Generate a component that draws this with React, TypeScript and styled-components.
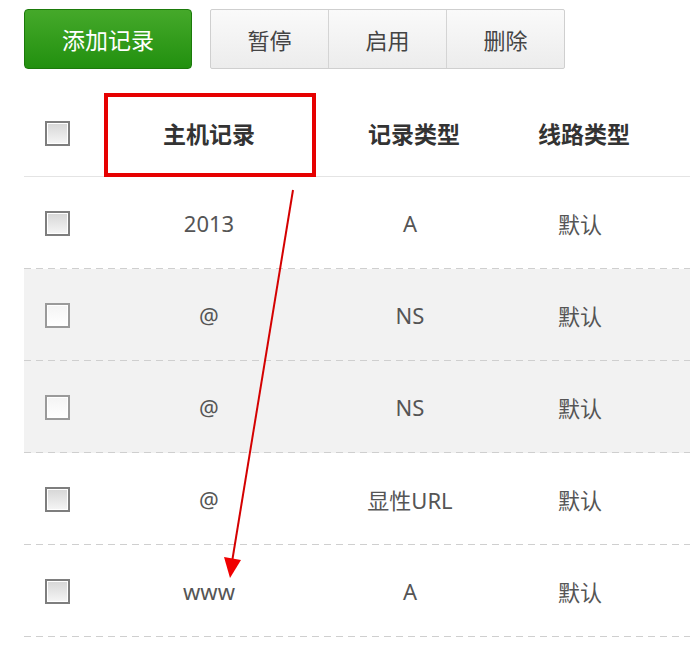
import styled, { createGlobalStyle } from 'styled-components';

interface DnsRecord {
  id: number;
  host: string;
  type: string;
  line: string;
  shaded?: boolean;
}

const RECORDS: DnsRecord[] = [
  { id: 1, host: '2013', type: 'A', line: '默认' },
  { id: 2, host: '@', type: 'NS', line: '默认', shaded: true },
  { id: 3, host: '@', type: 'NS', line: '默认', shaded: true },
  { id: 4, host: '@', type: '显性URL', line: '默认' },
  { id: 5, host: 'www', type: 'A', line: '默认' },
];

const GlobalStyle = createGlobalStyle`
  body {
    margin: 0;
    background: #fff;
    font-family: "Noto Sans", "Noto Sans CJK SC", sans-serif;
  }
`;

export default function App() {
  return (
    <>
      <GlobalStyle />
      <Page>
        <Toolbar>
          <PrimaryButton>添加记录</PrimaryButton>
          <ButtonGroup>
            <GroupButton>暂停</GroupButton>
            <GroupButton>启用</GroupButton>
            <GroupButton>删除</GroupButton>
          </ButtonGroup>
        </Toolbar>

        <Table>
          <HeaderRow>
            <CheckCell>
              <Checkbox />
            </CheckCell>
            <HostCell>主机记录</HostCell>
            <TypeCell>记录类型</TypeCell>
            <LineCell>线路类型</LineCell>
          </HeaderRow>
          {RECORDS.map((r) => (
            <Row key={r.id} $shaded={r.shaded}>
              <CheckCell>
                <Checkbox $light={r.shaded} />
              </CheckCell>
              <HostCell>{r.host}</HostCell>
              <TypeCell>{r.type}</TypeCell>
              <LineCell>{r.line}</LineCell>
            </Row>
          ))}
        </Table>

        {/* red annotation: box round the header cell and arrow down to "www" */}
        <Annotation width="690" height="650" viewBox="0 0 690 650">
          <rect x="106" y="95" width="208" height="80" fill="none" stroke="#e60000" strokeWidth="4" />
          <line x1="293" y1="190" x2="232" y2="562" stroke="#d40000" strokeWidth="2" />
          <polygon points="224,557 241,560 230,578" fill="#f00000" />
        </Annotation>
      </Page>
    </>
  );
}

const Page = styled.div`
  position: relative;
  width: 690px;
  height: 650px;
  padding: 9px 0 0 24px;
  box-sizing: border-box;
  overflow: hidden;
`;

const Toolbar = styled.div`
  display: flex;
  gap: 18px;
`;

const PrimaryButton = styled.div`
  width: 168px;
  height: 60px;
  box-sizing: border-box;
  display: flex;
  align-items: center;
  justify-content: center;
  border: 1px solid #1b7a0a;
  border-radius: 4px;
  background: linear-gradient(#45a92a, #22900f);
  color: #fff;
  font-family: "Noto Sans CJK SC", sans-serif;
  font-size: 23px;
`;

const ButtonGroup = styled.div`
  display: flex;
  width: 355px;
  height: 60px;
  border: 1px solid #cfcfcf;
  border-radius: 2px;
  box-sizing: border-box;
  background: linear-gradient(#fafafa, #ececec);
`;

const GroupButton = styled.div`
  flex: 1;
  display: flex;
  align-items: center;
  justify-content: center;
  color: #444;
  font-family: "Noto Sans CJK SC", sans-serif;
  font-size: 22px;

  & + & {
    border-left: 1px solid #d4d4d4;
  }
`;

const Table = styled.div`
  margin-top: 21px;
  width: 100%;
`;

const HeaderRow = styled.div`
  display: grid;
  grid-template-columns: 66px 238px 172px 168px 1fr;
  align-items: center;
  height: 86px;
  border-bottom: 1px solid #e4e4e4;
  color: #333;
  font-weight: 700;
  font-family: "Noto Sans CJK SC", sans-serif;
  font-size: 23px;
`;

const Row = styled.div<{ $shaded?: boolean }>`
  display: grid;
  grid-template-columns: 66px 238px 164px 176px 1fr;
  align-items: center;
  height: 92px;
  box-sizing: border-box;
  background-color: ${(p) => (p.$shaded ? '#f2f2f2' : '#fff')};
  background-image: repeating-linear-gradient(to right, #cfcfcf 0 7px, transparent 7px 12px);
  background-size: 100% 1px;
  background-position: left bottom;
  background-repeat: no-repeat;
  color: #555;
  font-family: "Noto Sans", "Noto Sans CJK SC", sans-serif;
  font-size: 22px;
`;

const CheckCell = styled.div`
  display: flex;
  justify-content: center;
`;

const HostCell = styled.div`
  text-align: center;
`;

const TypeCell = styled.div`
  text-align: center;
`;

const LineCell = styled.div`
  text-align: center;
`;

const Checkbox = styled.span<{ $light?: boolean }>`
  display: block;
  width: 25px;
  height: 25px;
  box-sizing: border-box;
  border: 2px solid ${(p) => (p.$light ? '#9a9a9a' : '#7e7e7e')};
  box-shadow: inset 0 0 0 1px #fff;
  background: ${(p) =>
    p.$light ? 'linear-gradient(#f4f4f4, #fff)' : 'linear-gradient(#d6d6d6, #f6f6f6)'};
`;

const Annotation = styled.svg`
  position: absolute;
  left: 0;
  top: 0;
  pointer-events: none;
`;
